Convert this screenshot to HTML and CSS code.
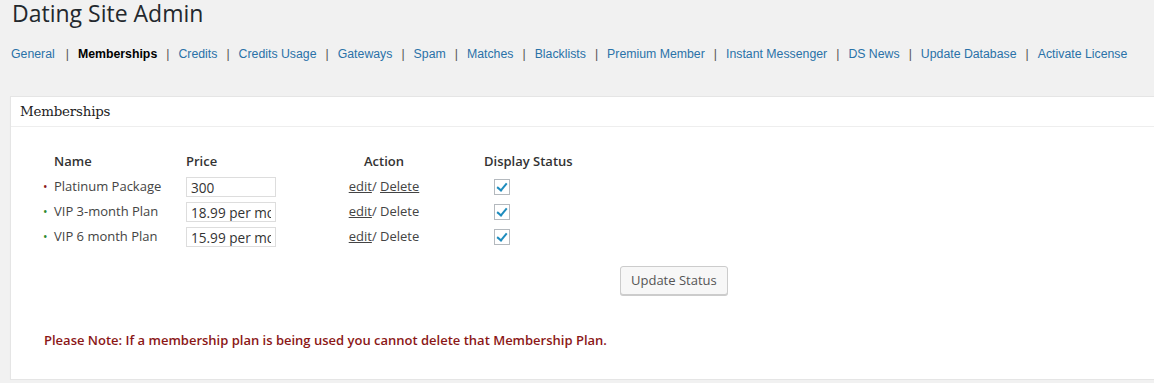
FILE: index.html
```html
<!DOCTYPE html>
<html lang="en">
<head>
  <meta charset="UTF-8">
  <title>Dating Site Admin</title>
  <link rel="stylesheet" href="styles.css">
</head>
<body>
  <div class="wrap">
    <h1>Dating Site Admin</h1>

    <!-- Sub navigation -->
    <ul class="subnav">
      <li><a href="#">General</a></li>
      <li><a href="#" class="current">Memberships</a></li>
      <li><a href="#">Credits</a></li>
      <li><a href="#">Credits Usage</a></li>
      <li><a href="#">Gateways</a></li>
      <li><a href="#">Spam</a></li>
      <li><a href="#">Matches</a></li>
      <li><a href="#">Blacklists</a></li>
      <li><a href="#">Premium Member</a></li>
      <li><a href="#">Instant Messenger</a></li>
      <li><a href="#">DS News</a></li>
      <li><a href="#">Update Database</a></li>
      <li><a href="#">Activate License</a></li>
    </ul>

    <!-- Memberships box -->
    <div class="postbox">
      <h3 class="hndle">Memberships</h3>
      <div class="inside">
        <table class="plans">
          <thead>
            <tr>
              <th class="c-name">Name</th>
              <th class="c-price">Price</th>
              <th class="c-action">Action</th>
              <th class="c-status">Display Status</th>
            </tr>
          </thead>
          <tbody>
            <tr>
              <td class="c-name"><span class="dot red">&bull;</span>Platinum Package</td>
              <td class="c-price"><input type="text" value="300"></td>
              <td class="c-action"><a href="#">edit</a>/ <a href="#">Delete</a></td>
              <td class="c-status"><span class="check"></span></td>
            </tr>
            <tr>
              <td class="c-name"><span class="dot green">&bull;</span>VIP 3-month Plan</td>
              <td class="c-price"><input type="text" value="18.99 per month"></td>
              <td class="c-action"><a href="#">edit</a>/ Delete</td>
              <td class="c-status"><span class="check"></span></td>
            </tr>
            <tr>
              <td class="c-name"><span class="dot green">&bull;</span>VIP 6 month Plan</td>
              <td class="c-price"><input type="text" value="15.99 per month"></td>
              <td class="c-action"><a href="#">edit</a>/ Delete</td>
              <td class="c-status"><span class="check"></span></td>
            </tr>
          </tbody>
        </table>

        <div class="actions">
          <button type="button">Update Status</button>
        </div>

        <p class="note">Please Note: If a membership plan is being used you cannot delete that Membership Plan.</p>
      </div>
    </div>
  </div>
</body>
</html>
```

FILE: styles.css
```css
/* --- Base --- */
*{box-sizing:border-box;margin:0;padding:0}
html,body{background:#f1f1f1;overflow:hidden}
body{font-family:"Open Sans",sans-serif;font-size:13px;color:#444}
.wrap{padding:0 0 0 10px}
h1{font-size:23px;font-weight:400;line-height:26px;color:#23282d;padding:0 0 0 2px}

/* --- Sub nav --- */
.subnav{list-style:none;display:flex;margin:19px 0 0 1px;font-family:"Liberation Sans",Arial,sans-serif;font-size:12.3px;line-height:18px;white-space:nowrap}
.subnav li{flex-shrink:0}
.subnav li:first-child{padding-right:2px}
.subnav li+li::before{content:"|";color:#555;padding:0 9px 0 9px}
.subnav a{color:#2a72a8;text-decoration:none}
.subnav a.current{color:#000;font-weight:700}

/* --- Postbox --- */
.postbox{margin-top:33px;margin-right:-20px;background:#fff;border:1px solid #e5e5e5;box-shadow:0 1px 1px rgba(0,0,0,.04);height:284px}
.hndle{font-family:"DejaVu Serif","Liberation Serif",serif;font-weight:400;font-size:13.4px;color:#222;line-height:29px;padding:0 0 0 9px;border-bottom:1px solid #eee;letter-spacing:-.2px}
.inside{padding:21px 0 0 32px}

/* --- Plans table --- */
.plans{border-collapse:collapse}
.plans th{font-weight:600;color:#333;text-align:left;height:25px;padding:0}
.plans td{height:25px;padding:0;color:#444}
.c-name{width:143px}
.plans th.c-name{padding-left:11px}
.dot{display:inline-block;width:11px;font-size:12px}
.dot.red{color:#8b1a1a}
.dot.green{color:#2e8b2e}
.c-price{width:145px}
.c-price input{width:90px;height:20px;border:1px solid #ddd;font:13.6px "Open Sans",sans-serif;color:#333;padding:0 4px;margin-top:3px}
.plans .c-action{width:106px;text-align:center}
.c-action a{color:#444}
.c-status{width:180px}
.plans th.c-status{padding-left:47px}
.plans td.c-status{padding-left:57px}
.check{display:inline-block;width:16px;height:16px;border:1px solid #b4b9be;vertical-align:middle;position:relative;top:0}
.check::after{content:"";position:absolute;left:4px;top:1px;width:4px;height:8px;border:solid #1e8cbe;border-width:0 2px 2px 0;transform:rotate(40deg)}

/* --- Button --- */
.actions{padding:18px 0 0 577px}
.actions button{height:29px;padding:0 10px 1px;border:1px solid #ccc;border-radius:3px;background:#f7f7f7;box-shadow:0 1px 0 #ccc;color:#555;font:13px "Open Sans",sans-serif}

/* --- Note --- */
.note{margin:36px 0 0 1px;color:#8b1717;font-weight:600}
```
